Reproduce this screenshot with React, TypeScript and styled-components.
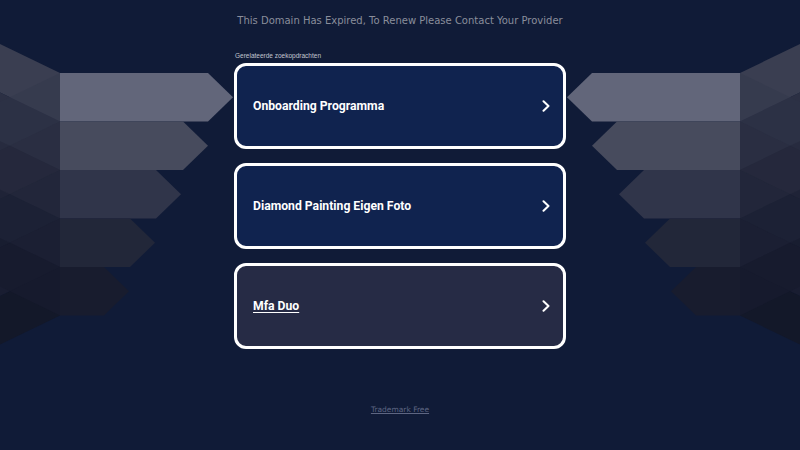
import styled, { createGlobalStyle } from 'styled-components';

const GlobalStyle = createGlobalStyle`
  html, body {
    margin: 0;
    padding: 0;
    background: #101b37;
  }
`;

const Page = styled.div`
  position: relative;
  width: 800px;
  min-height: 450px;
  overflow: hidden;
  background: #101b37;
  font-family: 'DejaVu Sans', Verdana, sans-serif;
`;

const Backdrop = styled.svg`
  position: absolute;
  top: 0;
  left: 0;
  width: 800px;
  height: 450px;
  z-index: 0;
`;

const Content = styled.div`
  position: relative;
  z-index: 1;
  display: flex;
  flex-direction: column;
  align-items: center;
`;

const Header = styled.div`
  height: 42px;
  display: flex;
  align-items: center;
  justify-content: center;
  font-size: 10px;
  line-height: 12px;
  color: #8a8e9b;
`;

const Column = styled.div`
  width: 332px;
  display: flex;
  flex-direction: column;
`;

const Label = styled.div`
  margin: 10px 0 3px 1px;
  font-family: 'Liberation Sans', Arial, sans-serif;
  font-size: 6.5px;
  line-height: 8px;
  color: #c3c7d0;
`;

const List = styled.div`
  display: flex;
  flex-direction: column;
  gap: 14px;
`;

const Card = styled.a<{ $muted?: boolean; $active?: boolean }>`
  box-sizing: border-box;
  height: 86px;
  display: flex;
  align-items: center;
  justify-content: space-between;
  padding: 0 13px 0 16px;
  border: 3px solid #ffffff;
  border-radius: 12px;
  background: ${(p) => (p.$muted ? '#262b45' : '#10234f')};
  color: #ffffff;
  font-family: Roboto, 'Liberation Sans', Arial, sans-serif;
  font-weight: 700;
  font-size: 12.2px;
  text-decoration: none;
  cursor: pointer;

  span {
    text-decoration: ${(p) => (p.$active ? 'underline' : 'none')};
    text-underline-offset: 2px;
  }
`;

const Footer = styled.a`
  margin-top: 56px;
  font-size: 7.5px;
  line-height: 10px;
  color: #5e6682;
  text-decoration: underline;
`;

const rows = [
  { fill: '#62667a', wing: '#3a3e51', fold: '#30344a', end: 208 },
  { fill: '#474b5d', wing: '#2c3044', fold: '#272b3f', end: 183 },
  { fill: '#30354a', wing: '#24283b', fold: '#1f2337', end: 156 },
  { fill: '#222739', wing: '#1c2034', fold: '#191d31', end: 130 },
  { fill: '#181c2e', wing: '#161a2d', fold: '#131829', end: 104 },
];

const ROW_H = 48.5;
const TOP = 73;
const SLANT = 29;

const Wing = () => (
  <g>
    {rows.map((r, i) => {
      const t = TOP + i * ROW_H;
      const b = t + ROW_H;
      return (
        <polygon
          key={`d${i}`}
          points={`0,${t + SLANT} 60,${t} 60,${b} 0,${b + SLANT}`}
          fill={r.fold}
        />
      );
    })}
    {rows.map((r, i) => {
      const t = TOP + i * ROW_H;
      const b = t + ROW_H;
      return (
        <polygon
          key={`u${i}`}
          points={`0,${t - SLANT} 60,${t} 60,${b} 0,${b - SLANT}`}
          fill={r.wing}
        />
      );
    })}
    {rows.slice(0, 4).map((r, i) => {
      const t = TOP + i * ROW_H;
      const b = t + ROW_H;
      return (
        <polygon
          key={`o${i}`}
          points={`0,${t + SLANT} 60,${t} 60,${b} 0,${b + SLANT}`}
          fill={r.fold}
          opacity={0.3}
        />
      );
    })}
    {rows.map((r, i) => {
      const t = TOP + i * ROW_H;
      const b = t + ROW_H;
      return (
        <polygon
          key={`a${i}`}
          points={`60,${t} ${r.end},${t} ${r.end + 25},${t + ROW_H / 2} ${r.end},${b} 60,${b}`}
          fill={r.fill}
        />
      );
    })}
  </g>
);

const Chevron = () => (
  <svg width="8" height="12" viewBox="0 0 8 12" fill="none">
    <polyline
      points="1.5,1.2 6.5,6 1.5,10.8"
      stroke="#ffffff"
      strokeWidth="2"
      strokeLinecap="round"
      strokeLinejoin="round"
    />
  </svg>
);

const links = [
  { title: 'Onboarding Programma' },
  { title: 'Diamond Painting Eigen Foto' },
  { title: 'Mfa Duo', muted: true, active: true },
];

export default function App() {
  return (
    <>
      <GlobalStyle />
      <Page>
        <Backdrop viewBox="0 0 800 450" aria-hidden="true">
          <Wing />
          <g transform="translate(800,0) scale(-1,1)">
            <Wing />
          </g>
        </Backdrop>
        <Content>
          <Header>This Domain Has Expired, To Renew Please Contact Your Provider</Header>
          <Column>
            <Label>Gerelateerde zoekopdrachten</Label>
            <List>
              {links.map((l) => (
                <Card key={l.title} $muted={l.muted} $active={l.active}>
                  <span>{l.title}</span>
                  <Chevron />
                </Card>
              ))}
            </List>
          </Column>
          <Footer>Trademark Free</Footer>
        </Content>
      </Page>
    </>
  );
}
